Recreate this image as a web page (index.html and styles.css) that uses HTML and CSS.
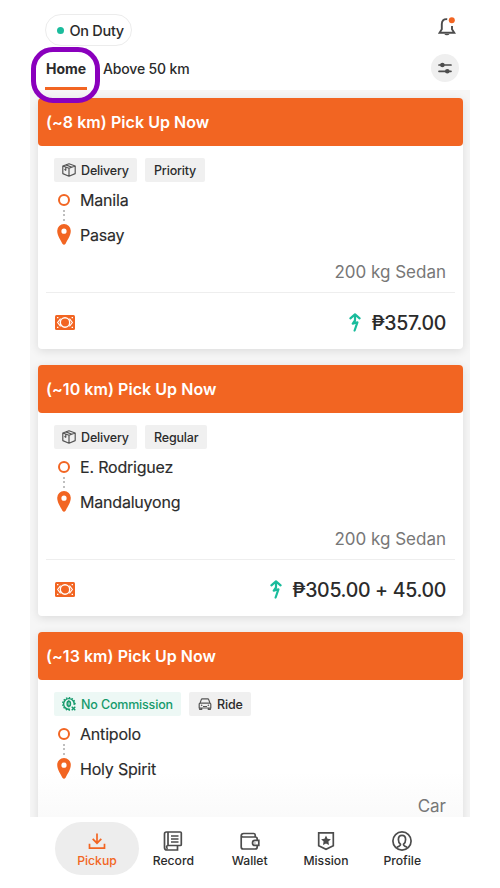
FILE: index.html
```html
<!DOCTYPE html>
<html lang="en">
<head>
<meta charset="utf-8">
<meta name="viewport" content="width=device-width, initial-scale=1">
<title>Pickup orders</title>
<link rel="stylesheet" href="styles.css">
</head>
<body>
<svg class="sprite" aria-hidden="true">
  <symbol id="box" viewBox="0 0 14 14"><path d="M7 .8 13.2 3v7.6L7 13.2.8 10.6V3zM.8 3 7 5.3 13.2 3M7 5.3v7.9M3.8 1.9l6.2 2.3M3.8 4.3v3.2M2.5 6.2l1.4 1.5"/></symbol>
  <symbol id="cash" viewBox="0 0 20 15"><rect width="20" height="15" rx="1.5" fill="#f26522"/><path d="M5.6 3.6 2.6 7.5l3 3.9M14.4 3.6l3 3.9-3 3.9" fill="none" stroke="#fff" stroke-width="1.1"/><circle cx="10" cy="7.5" r="4.7" fill="none" stroke="#fff" stroke-width="1.4"/><path d="M2 2h1.4v1.2H2zM16.6 2H18v1.2h-1.4zM2 11.8h1.4V13H2zM16.6 11.8H18V13h-1.4z" fill="#fff"/></symbol>
  <symbol id="surge" viewBox="0 0 12 19"><path d="M1.4 5.3 6 1.3l4.6 4M6 1.5v5.8L3.8 10.6l4.6-1.3L5.6 17.5" fill="none" stroke="#1abc9c" stroke-width="2.2" stroke-linecap="round" stroke-linejoin="round"/></symbol>
  <symbol id="pin" viewBox="0 0 14 21"><path fill-rule="evenodd" d="M7 0a6.8 6.8 0 0 0-6.8 6.8C.2 12 4 16.5 5.4 19.7q1.6 2.2 3.2 0C10 16.5 13.8 12 13.8 6.8A6.8 6.8 0 0 0 7 0m0 4.6a2.6 2.6 0 1 1 0 5.2 2.6 2.6 0 0 1 0-5.2" fill="#f26522"/></symbol>
</svg>
<main class="app">
  <header class="top">
    <div class="status-row">
      <div class="duty"><i></i><span>On Duty</span></div>
      <svg class="bell" viewBox="0 0 18 20"><path d="M9.2 2.2C5.7 1.8 3.8 3.9 3.8 7v5.2L1.5 15.8h14.8L14 12.2V9"/><path d="M6.3 17a2.8 1.9 0 0 0 5.2 0z" class="solid"/><circle cx="13.8" cy="3.2" r="3" class="alert"/></svg>
    </div>
    <div class="tab-row">
      <nav class="tabs"><a class="active"><span>Home</span><i class="marker"></i></a><a><span>Above 50 km</span></a></nav>
      <div class="filter"><svg viewBox="0 0 14 12"><path d="M1 3h12M1 9.3h12"/><circle cx="4.4" cy="3" r="2.3"/><circle cx="9.3" cy="9.3" r="2.3"/></svg></div>
    </div>
  </header>

  <section class="feed">
    <article class="card">
      <h2>(~8 km) Pick Up Now</h2>
      <div class="details">
        <div class="chips"><span class="chip"><svg><use href="#box"/></svg><b>Delivery</b></span><span class="chip"><b>Priority</b></span></div>
        <div class="stop"><i class="ring"></i><span>Manila</span></div>
        <div class="dots"><i></i><i></i><i></i></div>
        <div class="stop"><svg class="pin"><use href="#pin"/></svg><span>Pasay</span></div>
        <div class="vehicle">200 kg Sedan</div>
      </div>
      <div class="fare"><svg class="cash"><use href="#cash"/></svg><svg class="surge"><use href="#surge"/></svg><span>₱357.00</span></div>
    </article>

    <article class="card">
      <h2>(~10 km) Pick Up Now</h2>
      <div class="details">
        <div class="chips"><span class="chip"><svg><use href="#box"/></svg><b>Delivery</b></span><span class="chip"><b>Regular</b></span></div>
        <div class="stop"><i class="ring"></i><span>E. Rodriguez</span></div>
        <div class="dots"><i></i><i></i><i></i></div>
        <div class="stop"><svg class="pin"><use href="#pin"/></svg><span>Mandaluyong</span></div>
        <div class="vehicle">200 kg Sedan</div>
      </div>
      <div class="fare"><svg class="cash"><use href="#cash"/></svg><svg class="surge"><use href="#surge"/></svg><span>₱305.00 + 45.00</span></div>
    </article>

    <article class="card last">
      <h2>(~13 km) Pick Up Now</h2>
      <div class="details">
        <div class="chips">
          <span class="chip green"><svg viewBox="0 0 14 14"><path d="M8 12.1A5.3 5.3 0 1 1 12.1 8" stroke-width="1.4"/><path d="M8 13A6.2 6.2 0 1 1 13 8" stroke-width="1.3" stroke-dasharray="1.5 1.4"/><ellipse cx="6.8" cy="6.8" rx="1.7" ry="2.5" stroke-width="1.4"/><path d="M6.8 3v7.6" stroke-width=".8"/><path d="m9.7 9.7 3.6 3.5m0-3.5-3.6 3.5" stroke-width="1.4"/></svg><b>No Commission</b></span>
          <span class="chip"><svg viewBox="0 0 14 14"><path d="M2 6.1 3.3 2.6q.2-.7 1-.7h5.4q.8 0 1 .7L12 6.1M1.2 11V7.3q0-1.2 1.2-1.2h9.2q1.2 0 1.2 1.2V11zM1.7 11v1.4h2V11m6.6 0v1.4h2V11M3 8.1l1.3.4M11 8.1l-1.3.4M5 9.5h4"/></svg><b>Ride</b></span>
        </div>
        <div class="stop"><i class="ring"></i><span>Antipolo</span></div>
        <div class="dots"><i></i><i></i><i></i></div>
        <div class="stop"><svg class="pin"><use href="#pin"/></svg><span>Holy Spirit</span></div>
        <div class="vehicle">Car</div>
      </div>
    </article>
  </section>

  <nav class="bottom">
    <a class="active"><svg viewBox="0 0 20 20"><path d="M10 2.5v9M5.7 7.8l4.3 4.4 4.3-4.4M2.5 12.7v4.5h15v-4.5"/></svg><span>Pickup</span></a>
    <a><svg viewBox="0 0 20 20"><path d="M5 1h12.3q1 0 1 1v11.5q0 1-1 1H5zM5 1H3.5Q1.5 1 1.5 3v13.5q0 2.5 2.5 2.5h10.5v-4.5M5 14.5c-2 0-1.6 3-.2 3M8 5h7.5M8 8h7.5M8 11h7.5"/></svg><span>Record</span></a>
    <a><svg viewBox="0 0 20 20"><path d="M1.2 5V16q0 2 2 2h12q2 0 2-2v-1.5M1.2 5q0-2.5 2.5-2.5h10q1.5 0 1.5 1.5v1.7M1.2 5q.3 1 1.8 1h12.2q2 0 2 2v1.4M18.8 9.4H15a2.5 2.5 0 0 0 0 5h3.8zM14.6 12h.7"/></svg><span>Wallet</span></a>
    <a><svg viewBox="0 0 20 20"><path d="M2.7 1.8h14.6v13L10 18.2l-7.3-3.4z"/><path class="solid" d="m10 4.6 1.5 3.1 3.4.5-2.5 2.4.6 3.4-3-1.6L7 14l.6-3.4-2.5-2.4 3.4-.5z"/></svg><span>Mission</span></a>
    <a><svg viewBox="0 0 20 20"><circle cx="10" cy="10" r="9.1"/><path d="M10 4.3c-2.3 0-3.6 1.5-3.6 4.2 0 2.2.8 3.9 2.1 4.8.2 1.3-1 1.7-3.8 3M10 4.3c2.3 0 3.6 1.5 3.6 4.2 0 2.2-.8 3.9-2.1 4.8-.2 1.3 1 1.7 3.8 3"/></svg><span>Profile</span></a>
  </nav>
  <div class="highlight"></div>
</main>
</body>
</html>
```
FILE: styles.css
```css
* { box-sizing: border-box; }
body { margin: 0; background: #fff; color: #2b2b2b; font-family: Inter, "Noto Sans", sans-serif; }
.sprite { display: none; }
.app { position: relative; width: 440px; height: 888px; margin-left: 30px; display: flex; flex-direction: column; overflow: hidden; }

.top { height: 90px; flex: none; padding: 14px 11px 0 15px; }
.status-row { display: flex; justify-content: space-between; height: 32px; }
.duty { display: flex; align-items: center; gap: 5.5px; width: 87px; height: 32px; padding-left: 11px; border: 1.5px solid #ececec; border-radius: 16px; font-size: 14.5px; font-weight: 500; letter-spacing: -.3px; white-space: nowrap; }
.duty i { width: 7px; height: 7px; border-radius: 50%; background: #1abc9c; }
.bell { width: 18px; height: 20px; margin: 3px 3px 0 0; fill: none; stroke: #4c4c4c; stroke-width: 1.9; }
.bell .solid { fill: #4c4c4c; stroke: none; }
.bell .alert { fill: #f26522; stroke: none; }
.tab-row { display: flex; justify-content: space-between; padding-top: 8px; }
.tabs { display: flex; gap: 16px; padding-left: 1px; font-size: 14px; font-weight: 500; line-height: 30px; letter-spacing: -.15px; white-space: nowrap; }
.tabs .active { width: 41px; font-weight: 700; letter-spacing: 0; }
.tabs span { display: block; }
.marker { display: block; height: 3px; margin-top: 3px; margin-left: -1px; background: #f26522; }
.filter { width: 28px; height: 28px; border-radius: 50%; background: #efefef; display: grid; place-items: center; }
.filter svg { width: 14px; height: 12px; fill: #4c4c4c; stroke: #4c4c4c; stroke-width: 1.7; stroke-linecap: round; }
.filter circle { stroke: none; }

.feed { height: 727px; flex: none; padding: 8px 7.5px 0 7.5px; background: #f6f6f6; display: flex; flex-direction: column; gap: 16px; overflow: hidden; }
.card { height: 251px; flex: none; border-radius: 4px; background: #fff; box-shadow: 0 2px 10px #0000001c; }
.card.last { background: linear-gradient(#fff 140px, #fafafa 185px); }
h2 { margin: 0; height: 48px; padding-left: 8.5px; border-radius: 4px; background: #f26522; color: #fff; font-size: 16px; font-weight: 600; line-height: 48px; letter-spacing: .05px; }
.details { height: 147px; margin: 0 8px; padding: 12px 8px 0; border-bottom: 1.5px solid #eee; }
.last .details { border: 0; }
.chips { display: flex; gap: 8px; height: 24px; }
.chip { display: flex; align-items: center; gap: 5px; padding: 0 8.6px; border-radius: 2px; background: #f0f0f0; font-size: 12.5px; letter-spacing: -.18px; }
.chip b { font-weight: 500; }
.chip svg { width: 14px; height: 14px; fill: none; stroke: #555; stroke-width: 1.2; stroke-linejoin: round; }
.chip.green { background: #edf8f5; color: #159a6c; }
.chip.green svg { stroke: #159a6c; }
.stop { display: flex; align-items: center; gap: 9.5px; height: 25px; margin: 5px 0 0 3px; font-size: 16px; font-weight: 400; letter-spacing: -.2px; -webkit-text-stroke: .15px; }
.ring { width: 12px; height: 12px; margin: 0 1px; border: 2px solid #f26522; border-radius: 50%; }
.pin { width: 14px; height: 21px; }
.dots { display: flex; flex-direction: column; gap: 2.3px; width: 2px; height: 11px; margin: -2px 0 -6px 9px; }
.dots i { width: 2px; height: 2px; background: #aaa; border-radius: 50%; }
.dots + .stop { margin-top: 7px; }
.vehicle { margin-top: 13px; padding-right: .5px; text-align: right; font-size: 17px; line-height: 25px; color: #777; }
.fare { display: flex; align-items: center; height: 57px; padding: 2px 16.5px 0 17.5px; font-size: 19.5px; font-weight: 500; line-height: 28px; letter-spacing: -.32px; }
.cash { width: 20px; height: 15px; margin-right: auto; }
.surge { width: 12px; height: 19px; margin-right: 10.5px; }

.bottom { display: flex; height: 71px; padding: 5px 0 0 25px; }
.bottom a { flex: none; display: flex; flex-direction: column; align-items: center; width: 76.3px; padding-top: 9px; font-size: 12.2px; font-weight: 500; line-height: 16px; }
.bottom svg { width: 20px; height: 20px; margin-bottom: 1.5px; fill: none; stroke: #4c4c4c; stroke-width: 1.7; }
.bottom svg .solid { fill: #4c4c4c; stroke: none; }
.bottom .active { width: 84px; height: 53px; margin-right: -3.8px; border-radius: 27px; background: #ededed; color: #f26522; }
.bottom .active svg { stroke: #f26522; }
.highlight { position: absolute; left: 1px; top: 46.5px; width: 69px; height: 56px; border: 5.5px solid #8a00bd; border-radius: 22px; }
```
